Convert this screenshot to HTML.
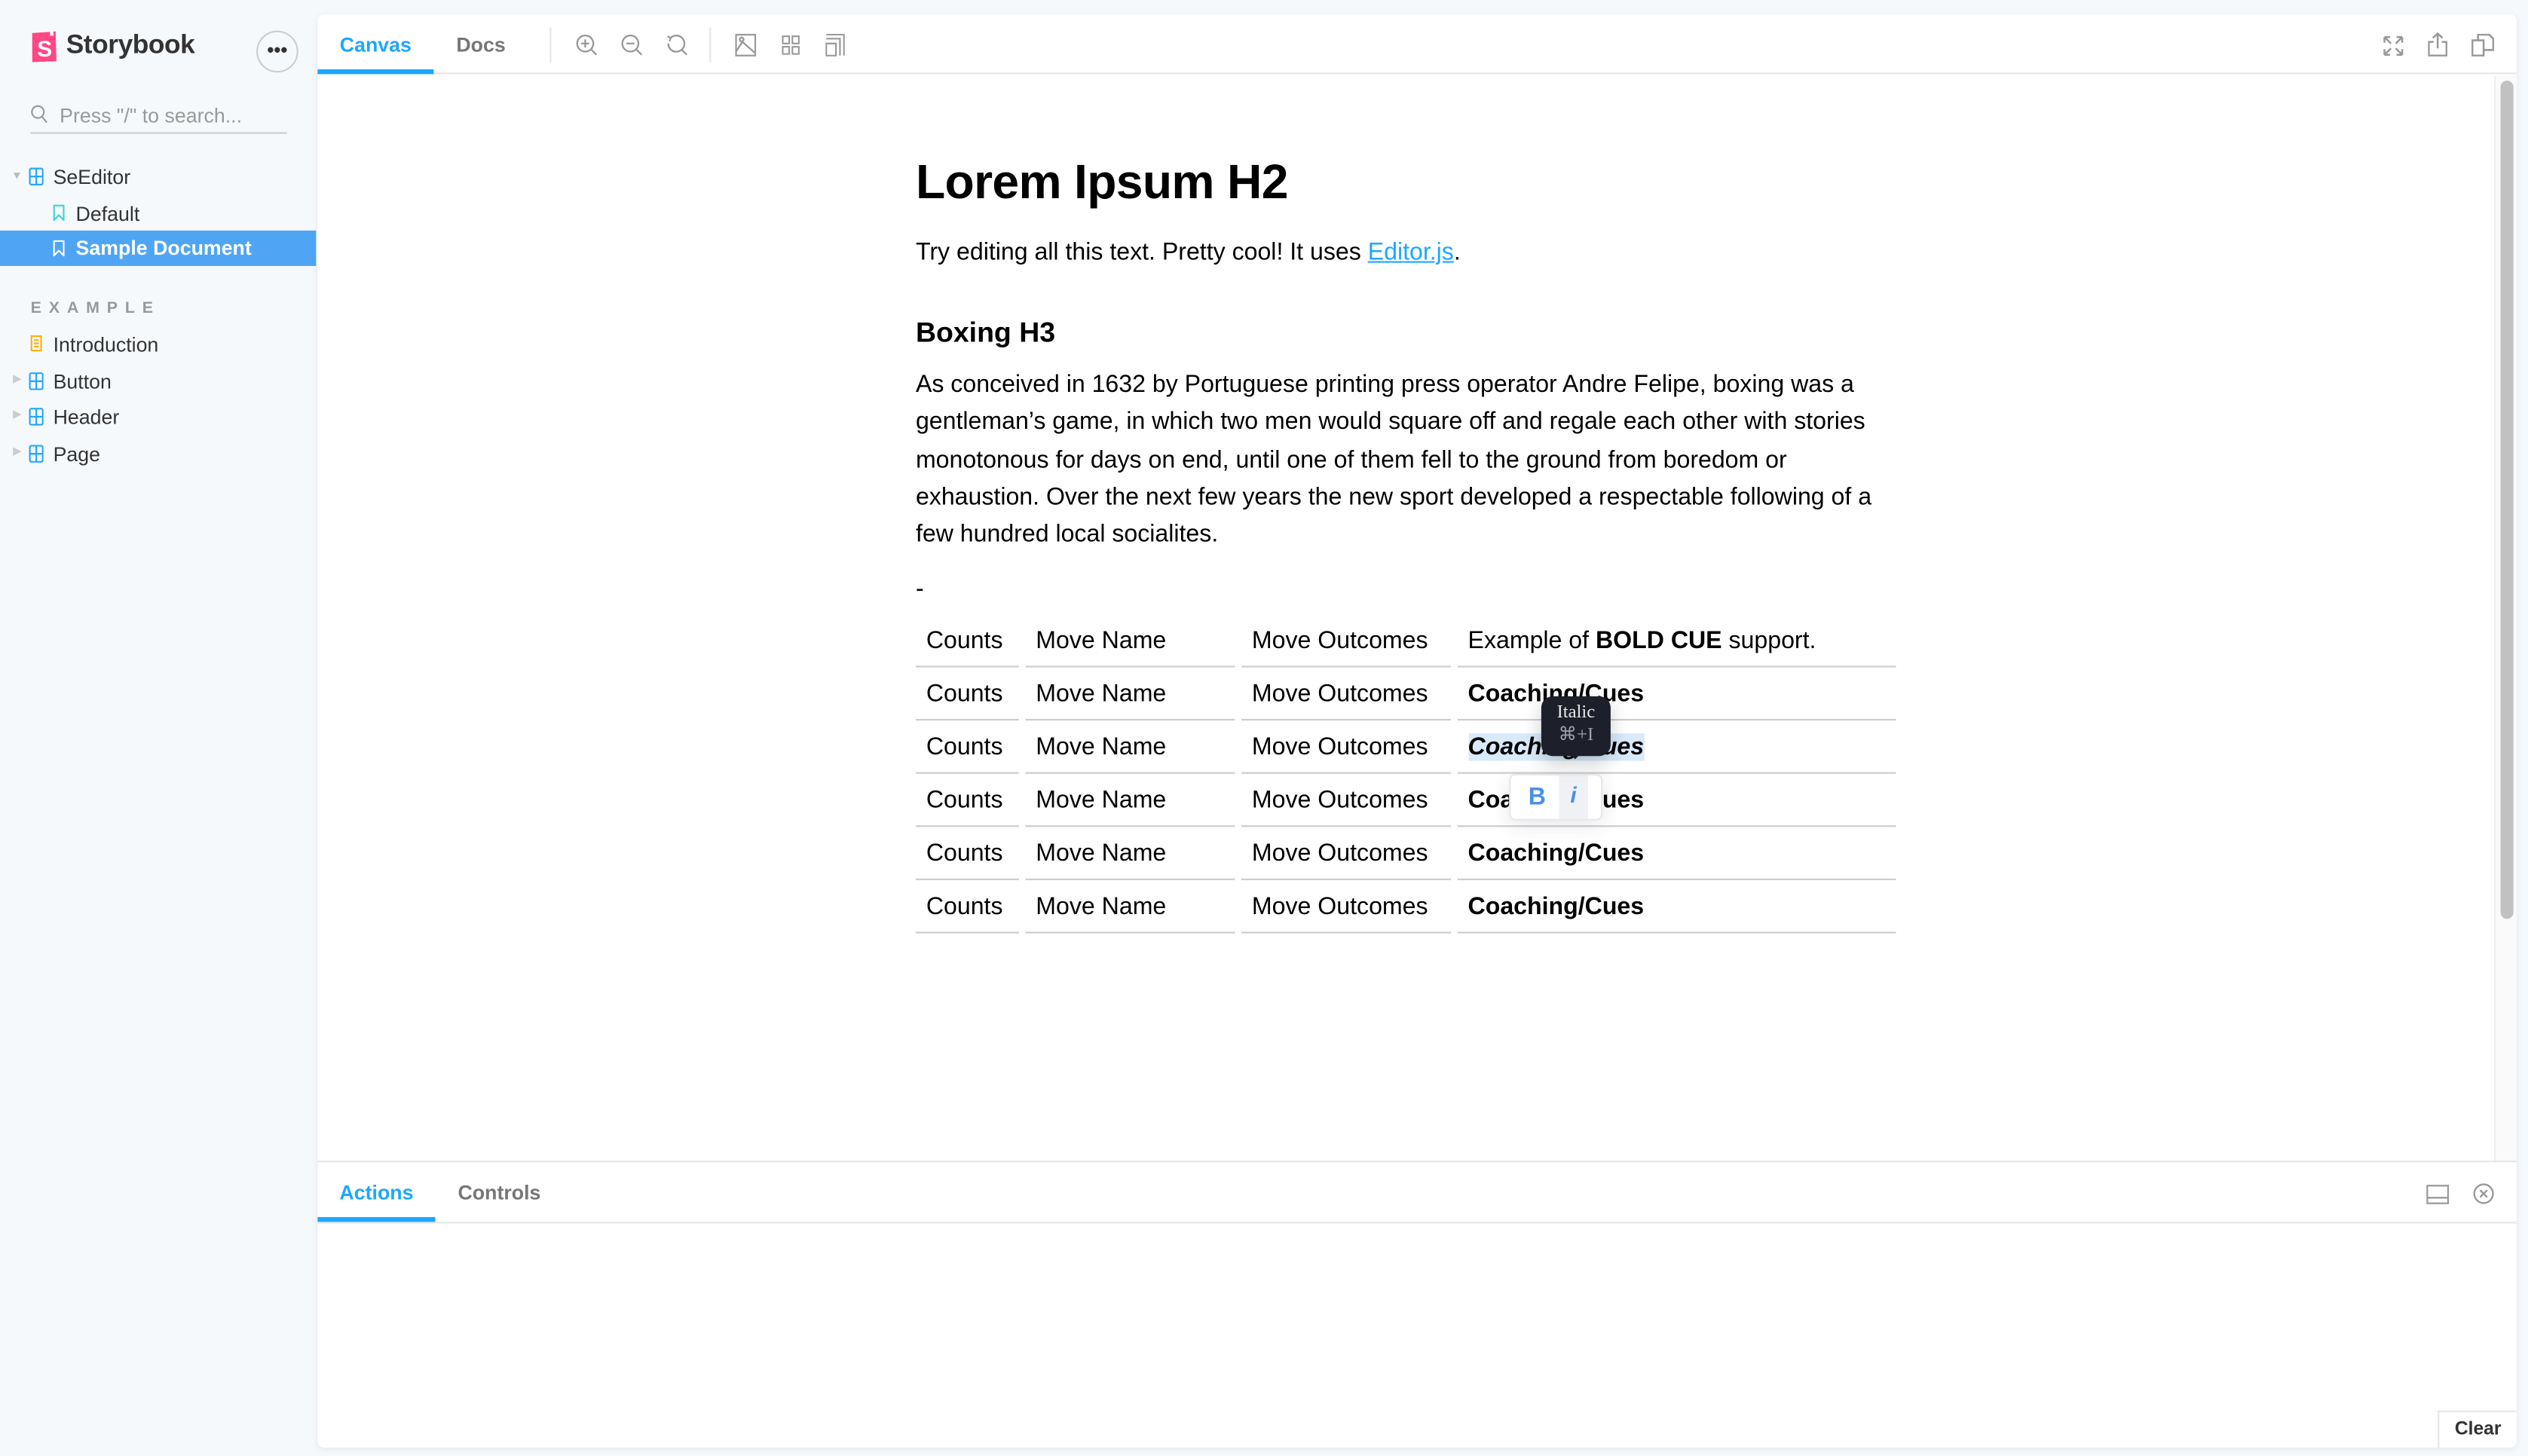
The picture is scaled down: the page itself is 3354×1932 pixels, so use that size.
<!DOCTYPE html>
<html><head><meta charset="utf-8"><style>
*{box-sizing:border-box;margin:0;padding:0}
html,body{width:3354px;height:1932px;overflow:hidden;background:#f6f9fc}
#root{position:absolute;left:0;top:0;width:1568px;height:903px;transform:scale(2.1390);transform-origin:0 0;font-family:"Liberation Sans",sans-serif;color:#333;background:#f6f9fc}
.a{position:absolute}
.tree{position:absolute;left:0;width:196px;height:22px;line-height:22px;font-size:12.5px}
.ic{position:absolute}
.panel{position:absolute;left:197px;top:9px;width:1364px;height:889px;background:#fff;border-radius:4px;box-shadow:0 1px 4px rgba(0,0,0,.08)}
.tb{position:absolute;top:0;left:0;right:0;height:37px;border-bottom:1px solid #e6e6e6}
.tab{position:absolute;top:0;height:37px;line-height:38px;font-size:12.5px;font-weight:bold;color:#777}
.doc{position:absolute;left:568px;font-family:"Liberation Sans",sans-serif;color:#000}
table{border-collapse:separate;border-spacing:4px 0;position:absolute;left:564px;top:381px}
td{height:33px;font-size:15px;padding:0 6.5px;border-bottom:1px solid #ccc;color:#000;white-space:nowrap;vertical-align:middle;padding-top:1px}
</style></head><body><div id="root">
<svg class="a" style="left:19px;top:19px" width="17" height="20" viewBox="0 0 17 20"><path d="M1 1.5 L15.5 0.5 L16 19 L1 19.5Z" fill="#ff4785"/><path d="M12 0.7 L12.2 3.5 L13.3 2.8 L14.2 3.6 L14 0.6Z" fill="#fff"/><text x="4" y="16" font-family="Liberation Sans" font-weight="bold" font-size="14" fill="#fff">S</text></svg>
<div class="a" style="left:41px;top:19px;font-size:16.5px;font-weight:bold;color:#333;letter-spacing:-.2px">Storybook</div>
<div class="a" style="left:159px;top:19px;width:26px;height:26px;border-radius:50%;border:1px solid #ccc;text-align:center;line-height:22px;font-size:12px;font-weight:bold;color:#333">•••</div>
<svg class="a" style="left:19px;top:65px" width="11" height="12" viewBox="0 0 11 12"><circle cx="4.5" cy="4.5" r="3.7" fill="none" stroke="#999" stroke-width="1"/><path d="M7.2 7.5 L10 11" stroke="#999"/></svg>
<div class="a" style="left:37px;top:65px;font-size:12.5px;color:#999">Press "/" to search...</div>
<div class="a" style="left:19px;top:82px;width:159px;height:1px;background:#ccc"></div>
<div class="a" style="left:7px;top:106px;font-size:7px;color:#bbb">▼</div>
<svg class="ic" style="left:18px;top:104px" width="9" height="11" viewBox="0 0 9 11"><rect x=".5" y=".5" width="8" height="10" rx="1" fill="none" stroke="#1ea7fd"/><path d="M4.5 .5V10.5M.5 5.5H8.5" stroke="#1ea7fd"/></svg>
<div class="tree" style="top:99px;padding-left:33px">SeEditor</div>
<svg class="ic" style="left:33px;top:127px" width="7" height="10" viewBox="0 0 7 10"><path d="M.5 .5H6.5V9.5L3.5 6.5L.5 9.5Z" fill="none" stroke="#37d5d3"/></svg>
<div class="tree" style="top:122px;padding-left:47px">Default</div>
<div class="tree" style="top:143px;height:22px;background:#4fa5f4;color:#fff;font-weight:bold;padding-left:47px;line-height:23px">Sample Document</div>
<svg class="ic" style="left:33px;top:149px" width="7" height="10" viewBox="0 0 7 10"><path d="M.5 .5H6.5V9.5L3.5 6.5L.5 9.5Z" fill="none" stroke="#fff"/></svg>
<div class="a" style="left:19px;top:186px;font-size:10px;font-weight:bold;letter-spacing:4.6px;color:#999">EXAMPLE</div>
<svg class="ic" style="left:19px;top:208px" width="7" height="10" viewBox="0 0 7 10"><rect x=".5" y=".5" width="6" height="9" fill="none" stroke="#ffae00"/><path d="M2 3H5M2 5H5M2 7H5" stroke="#ffae00"/></svg>
<div class="tree" style="top:203px;padding-left:33px">Introduction</div>
<div class="a" style="left:8px;top:231px;font-size:7px;color:#ccc">▶</div>
<svg class="ic" style="left:18px;top:231px" width="9" height="11" viewBox="0 0 9 11"><rect x=".5" y=".5" width="8" height="10" rx="1" fill="none" stroke="#1ea7fd"/><path d="M4.5 .5V10.5M.5 5.5H8.5" stroke="#1ea7fd"/></svg>
<div class="tree" style="top:226px;padding-left:33px">Button</div>
<div class="a" style="left:8px;top:253px;font-size:7px;color:#ccc">▶</div>
<svg class="ic" style="left:18px;top:253px" width="9" height="11" viewBox="0 0 9 11"><rect x=".5" y=".5" width="8" height="10" rx="1" fill="none" stroke="#1ea7fd"/><path d="M4.5 .5V10.5M.5 5.5H8.5" stroke="#1ea7fd"/></svg>
<div class="tree" style="top:248px;padding-left:33px">Header</div>
<div class="a" style="left:8px;top:276px;font-size:7px;color:#ccc">▶</div>
<svg class="ic" style="left:18px;top:276px" width="9" height="11" viewBox="0 0 9 11"><rect x=".5" y=".5" width="8" height="10" rx="1" fill="none" stroke="#1ea7fd"/><path d="M4.5 .5V10.5M.5 5.5H8.5" stroke="#1ea7fd"/></svg>
<div class="tree" style="top:271px;padding-left:33px">Page</div>

<div class="panel">
 <div class="tb">
  <div class="tab" style="left:0;width:72px;text-align:center;color:#1ea7fd">Canvas</div>
  <div class="a" style="left:0;top:34px;width:72px;height:3px;background:#1ea7fd"></div>
  <div class="tab" style="left:86px">Docs</div>
  <div class="a" style="left:144px;top:8px;width:1px;height:22px;background:#e6e6e6"></div>
  <svg class="a" style="left:160px;top:12px" width="14" height="14" viewBox="0 0 14 14" fill="none" stroke="#999" stroke-width="1.1"><circle cx="6" cy="6" r="5"/><path d="M9.6 9.6L13 13M6 3.5V8.5M3.5 6H8.5"/></svg>
  <svg class="a" style="left:188px;top:12px" width="14" height="14" viewBox="0 0 14 14" fill="none" stroke="#999" stroke-width="1.1"><circle cx="6" cy="6" r="5"/><path d="M9.6 9.6L13 13M3.5 6H8.5"/></svg>
  <svg class="a" style="left:216px;top:12px" width="14" height="14" viewBox="0 0 14 14" fill="none" stroke="#999" stroke-width="1.1"><path d="M3 2.5A5 5 0 1 1 1.5 6"/><path d="M1 1.5L3 2.5L2.3 4.6M9.6 9.6L13 13"/></svg>
  <div class="a" style="left:243px;top:8px;width:1px;height:22px;background:#e6e6e6"></div>
  <svg class="a" style="left:259px;top:12px" width="13" height="14" viewBox="0 0 13 14" fill="none" stroke="#999" stroke-width="1.1"><rect x=".5" y=".5" width="12" height="13"/><path d="M.5 11L4.5 5L12.5 12"/><circle cx="4" cy="3.5" r="1.2"/></svg>
  <svg class="a" style="left:288px;top:13px" width="11" height="12" viewBox="0 0 11 12" fill="none" stroke="#999"><rect x=".5" y=".5" width="4" height="4.5"/><rect x="6.5" y=".5" width="4" height="4.5"/><rect x=".5" y="7" width="4" height="4.5"/><rect x="6.5" y="7" width="4" height="4.5"/></svg>
  <svg class="a" style="left:315px;top:12px" width="12" height="14" viewBox="0 0 12 14" fill="none" stroke="#999"><path d="M.5 .5H11.5V13.5M.5 3H9V13.5M.5 6H6.5V13.5H.5Z"/></svg>
  <svg class="a" style="left:1281px;top:13px" width="13" height="13" viewBox="0 0 13 13" fill="none" stroke="#999" stroke-width="1.2"><path d="M1 1L5 5M1 1H4.5M1 1V4.5M12 1L8 5M12 1H8.5M12 1V4.5M1 12L5 8M1 12H4.5M1 12V8.5M12 12L8 8M12 12H8.5M12 12V8.5"/></svg>
  <svg class="a" style="left:1309px;top:11px" width="12" height="15" viewBox="0 0 12 15" fill="none" stroke="#999" stroke-width="1.2"><path d="M3.5 6H.5V14.5H11.5V6H8.5M6 10V1M3 3.5L6 .8L9 3.5"/></svg>
  <svg class="a" style="left:1336px;top:12px" width="14" height="14" viewBox="0 0 14 14" fill="none" stroke="#999" stroke-width="1.2"><path d="M.5 4H7.5V13.5H.5Z"/><path d="M4 4V.5H11L13.5 3V10H7.5"/></svg>
 </div>
 <div class="a" style="left:1350px;top:38px;width:14px;height:674px;background:#fafafa;border-left:1px solid #eee"></div>
 <div class="a" style="left:1354px;top:41px;width:8px;height:520px;border-radius:4px;background:#c1c1c1"></div>
 <div class="a" style="left:0;top:711px;width:1364px;height:1px;background:#e6e6e6"></div>
 <div class="a" style="left:0;top:749px;width:1364px;height:1px;background:#e6e6e6"></div>
 <div class="tab" style="left:0;top:712px;width:73px;text-align:center;color:#1ea7fd">Actions</div>
 <div class="a" style="left:0;top:746px;width:73px;height:3px;background:#1ea7fd"></div>
 <div class="tab" style="left:87px;top:712px">Controls</div>
 <svg class="a" style="left:1308px;top:726px" width="14" height="12" viewBox="0 0 14 12" fill="none" stroke="#999" stroke-width="1.1"><rect x=".5" y=".5" width="13" height="11"/><path d="M.5 8H13.5"/></svg>
 <svg class="a" style="left:1337px;top:725px" width="13" height="13" viewBox="0 0 13 13" fill="none" stroke="#999" stroke-width="1.1"><circle cx="6.5" cy="6.5" r="5.8"/><path d="M4.3 4.3L8.7 8.7M8.7 4.3L4.3 8.7"/></svg>
 <div class="a" style="left:1315px;top:866px;width:49px;height:23px;border-top:1px solid #e6e6e6;border-left:1px solid #e6e6e6;font-size:11.5px;font-weight:bold;color:#333;text-align:center;line-height:23px">Clear</div>
</div>

<div class="doc" style="top:97px;font-size:30px;font-weight:bold;letter-spacing:-.3px">Lorem Ipsum H2</div>
<div class="doc" style="top:148px;font-size:15px">Try editing all this text. Pretty cool! It uses <span style="color:#1ea7fd;text-decoration:underline">Editor.js</span>.</div>
<div class="doc" style="top:196px;font-size:17.5px;font-weight:bold">Boxing H3</div>
<div class="doc" style="top:227px;font-size:15px;line-height:23.3px;width:605px">As conceived in 1632 by Portuguese printing press operator Andre Felipe, boxing was a gentleman’s game, in which two men would square off and regale each other with stories monotonous for days on end, until one of them fell to the ground from boredom or exhaustion. Over the next few years the new sport developed a respectable following of a few hundred local socialites.</div>
<div class="doc" style="top:357px;font-size:15px">-</div>
<table>
<tr><td style="width:64px">Counts</td><td style="width:130px">Move Name</td><td style="width:130px">Move Outcomes</td><td style="width:272px">Example of <b>BOLD CUE</b> support.</td></tr>
<tr><td>Counts</td><td>Move Name</td><td>Move Outcomes</td><td><b>Coaching/Cues</b></td></tr>
<tr><td>Counts</td><td>Move Name</td><td>Move Outcomes</td><td><b><i style="background:#d9eafb">Coaching/Cues</i></b></td></tr>
<tr><td>Counts</td><td>Move Name</td><td>Move Outcomes</td><td><b>Coaching/Cues</b></td></tr>
<tr><td>Counts</td><td>Move Name</td><td>Move Outcomes</td><td><b>Coaching/Cues</b></td></tr>
<tr><td>Counts</td><td>Move Name</td><td>Move Outcomes</td><td><b>Coaching/Cues</b></td></tr>
</table>
<div class="a" style="left:936px;top:480px;width:58px;height:29px;background:#fff;border:1px solid #e8e8eb;border-radius:4px;box-shadow:0 3px 12px rgba(60,60,90,.12);overflow:hidden">
 <div class="a" style="left:30px;top:0;height:29px;background:#eff1f5;width:18px"></div>
 <div class="a" style="left:11px;top:5px;font-size:15px;font-weight:bold;color:#4a8fe7">B</div>
 <div class="a" style="left:37px;top:4px;font-size:14px;font-weight:bold;font-style:italic;color:#4a8fe7">i</div>
</div>
<div class="a" style="left:956px;top:432px;width:43px;height:37px;background:#1d202b;border-radius:7px;box-shadow:0 4px 12px rgba(0,0,0,.2);text-align:center;font-family:'Liberation Serif',serif;font-size:11.5px;line-height:14px;padding-top:3px;color:#e8e8e8">Italic<br><span style="color:#a0a0a8">⌘+I</span></div>
<div class="a" style="left:972px;top:466px;width:0;height:0;border-left:5px solid transparent;border-right:5px solid transparent;border-top:5px solid #1d202b"></div>
</div></body></html>
